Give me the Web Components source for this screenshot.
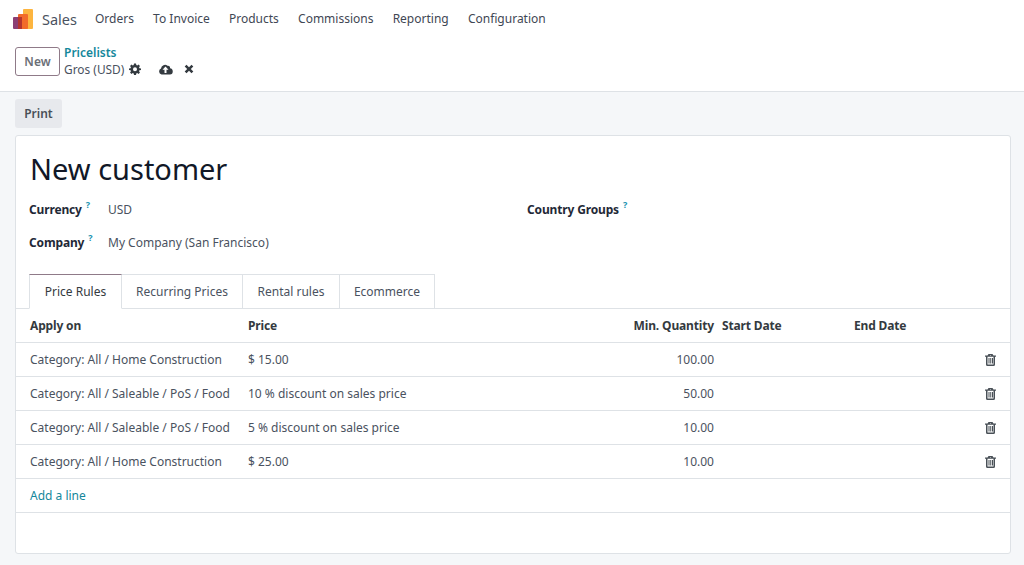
<!DOCTYPE html>
<html>
<head>
<meta charset="utf-8">
<title>Sales</title>
<style>
  html, body { margin: 0; padding: 0; height: 100%; overflow: hidden; }
  body { background: #f5f7f9; font: 12px "Noto Sans", sans-serif; color: #495057; }
</style>
</head>
<body>
<app-root></app-root>
<script>
const FONT = '"Noto Sans", "Open Sans", sans-serif';

class AppNavbar extends HTMLElement {
  constructor() {
    super();
    this.attachShadow( {mode: 'open'} ).innerHTML = /* template */ `
      <style>
        :host { display: flex; align-items: center; height: 37px; background: #fff; padding-left: 13px; font-family: ${FONT}; }
        svg { width: 20px; height: 20px; display: block; margin-top: 1px; }
        b { font-weight: 400; font-size: 14.5px; color: #4a5260; margin: 0 18px 0 9px; }
        span { font-size: 12px; color: #3f4754; margin-right: 19.2px; }
      </style>
      <svg viewBox="0 0 20 20">
        <rect x="10" y="0" width="10" height="20" rx="1" fill="#fdb53f"/>
        <rect x="5" y="5" width="10" height="15" rx="1" fill="#f26b2a"/>
        <rect x="0" y="8" width="9" height="12" rx="1" fill="#8c3f74"/>
        <rect x="5" y="8" width="4" height="12" fill="#b5352f"/>
      </svg>
      <b>Sales</b>
      <span>Orders</span><span>To Invoice</span><span>Products</span><span>Commissions</span><span>Reporting</span><span>Configuration</span>
    `;
  }
}
customElements.define( 'app-navbar', AppNavbar );

class AppControlPanel extends HTMLElement {
  constructor() {
    super();
    this.attachShadow( {mode: 'open'} ).innerHTML = /* template */ `
      <style>
        :host { display: flex; align-items: center; height: 54px; background: #fff; border-bottom: 1px solid #dee2e6; padding: 0 0 0 15px; font-family: ${FONT}; box-sizing: content-box; }
        button { width: 45px; height: 29px; box-sizing: border-box; margin: -5px 4px 0 0; padding: 0; background: #fff; border: 1px solid #8f7a88; border-radius: 3px; font: 600 12px ${FONT}; color: #6b6f76; }
        .crumb { display: flex; flex-direction: column; margin-top: -5px; }
        a { color: #14879b; font-size: 12px; font-weight: 600; line-height: 15px; }
        .row { display: flex; align-items: center; height: 18px; color: #4a5260; font-size: 11.9px; }
        svg { display: block; fill: #343a40; }
        .gear { margin-left: 5px; }
        .cloud { margin-left: 17px; }
        .close { margin-left: 11px; }
      </style>
      <button>New</button>
      <div class="crumb">
        <a>Pricelists</a>
        <div class="row">
          <span>Gros (USD)</span>
          <svg class="gear" width="12" height="12" viewBox="0 0 24 24"><path fill-rule="evenodd" d="M10 1h4l.6 3.100 1.900.8L19.100 3.100 21.900 6l-1.800 2.600.8 1.900L24 11v3l-3.100.6-.8 1.900 1.800 2.600-2.800 2.800-2.600-1.800-1.900.8L14 24h-4l-.6-3.100-1.900-.8-2.600 1.800L2.100 19.100l1.800-2.600-.8-1.900L0 14v-3l3.100-.6.8-1.900L2.100 6l2.800-2.900 2.600 1.800 1.900-.8zM12 8.500a4 4 0 1 0 0 8 4 4 0 0 0 0-8z"/></svg>
          <svg class="cloud" width="15" height="12" viewBox="0 0 30 24"><path fill-rule="evenodd" d="M24 10.500A4 4 0 0 0 19 5.500 8 8 0 0 0 6 10.800 6.500 6.500 0 0 0 7 23h17a6.300 6.300 0 0 0 0-12.500zM15 7l6 6.500h-4V20h-4v-6.500H9z"/></svg>
          <svg class="close" width="10" height="10" viewBox="0 0 22 22"><path d="M5.500 1.500 11 7l5.500-5.500 4 4L15 11l5.500 5.500-4 4L11 15l-5.500 5.500-4-4L7 11 1.500 5.500z"/></svg>
        </div>
      </div>
    `;
  }
}
customElements.define( 'app-control-panel', AppControlPanel );

class AppField extends HTMLElement {
  constructor() {
    super();
    this.attachShadow( {mode: 'open'} ).innerHTML = /* template */ `
      <style>
        :host { display: grid; grid-template-columns: 79px 1fr; align-items: center; height: 33px; font-family: ${FONT}; font-size: 12px; }
        label { font-weight: 700; color: #1f2937; white-space: nowrap; letter-spacing: -.15px; }
        sup { color: #1a93b0; font-size: 9px; font-weight: 700; margin-left: 4px; line-height: 0; vertical-align: 6px; }
        div { color: #4a5260; }
      </style>
      <label></label><div><slot></slot></div>
    `;
    this.shadowRoot.querySelector( 'label' ).innerHTML = this.getAttribute( 'label' ) + '<sup>?</sup>';
  }
}
customElements.define( 'app-field', AppField );

class AppTabs extends HTMLElement {
  constructor() {
    super();
    this.attachShadow( {mode: 'open'} ).innerHTML = /* template */ `
      <style>
        :host { display: flex; padding-left: 13px; height: 35px; box-sizing: border-box; border-bottom: 1px solid #dee2e6; font-family: ${FONT}; font-size: 12px; color: #4a5260; }
        div { height: 35px; box-sizing: border-box; display: flex; align-items: center; justify-content: center; border: 1px solid #dee2e6; border-left: 0; }
        .on { background: #fff; color: #343a40; border-left: 1px solid #dee2e6; border-top-color: #8f7a88; border-bottom-color: #fff; width: 93px; }
      </style>
      <div class="on">Price Rules</div>
      <div style="width: 121px">Recurring Prices</div>
      <div style="width: 97px">Rental rules</div>
      <div style="width: 95px">Ecommerce</div>
    `;
  }
}
customElements.define( 'app-tabs', AppTabs );

class AppTrash extends HTMLElement {
  constructor() {
    super();
    this.attachShadow( {mode: 'open'} ).innerHTML = /* template */ `
      <style>
        :host { display: block; width: 11px; height: 12px; }
        svg { display: block; fill: #495057; }
      </style>
      <svg width="11" height="12" viewBox="0 0 22 24"><path fill-rule="evenodd" d="M7 0h8l2 3h5v2.500h-2V21a3 3 0 0 1-3 3H5a3 3 0 0 1-3-3V5.500H0V3h5zM9.500 3h3l-.7-1h-1.600zM5 5.500V21h12V5.500zM7 8h2v11H7zm3.500 0h2v11h-2zM14 8h2v11h-2z"/></svg>
    `;
  }
}
customElements.define( 'app-trash', AppTrash );

class AppRuleRow extends HTMLElement {
  constructor() {
    super();
    this.attachShadow( {mode: 'open'} ).innerHTML = /* template */ `
      <style>
        :host { display: grid; grid-template-columns: 218px 1fr 100px 132px 131px 11px; align-items: center; height: 34px; box-sizing: border-box; padding: 0 14px; border-bottom: 1px solid #dee2e6; font-family: ${FONT}; font-size: 12px; color: #4a5260; }
        :host( [head] ) { font-weight: 700; color: #343a40; letter-spacing: -.15px; }
        .q { text-align: right; padding-right: 8px; margin-left: -20px; white-space: nowrap; }
        .s, .e { white-space: nowrap; }
      </style>
      <div class="a"></div><div class="p"></div><div class="q"></div><div class="s"></div><div class="e"></div><slot></slot>
    `;
    for( const key of ['a', 'p', 'q', 's', 'e'] ) {
      this.shadowRoot.querySelector( '.' + key ).textContent = this.getAttribute( key ) || '';
    }
  }
}
customElements.define( 'app-rule-row', AppRuleRow );

class AppRoot extends HTMLElement {
  constructor() {
    super();
    this.attachShadow( {mode: 'open'} ).innerHTML = /* template */ `
      <style>
        :host { display: block; font-family: ${FONT}; }
        .actions { padding: 7px 15px; display: flex; height: 29px; }
        .print { width: 47px; height: 29px; border: 0; padding: 0; background: #e7e9ed; border-radius: 3px; font: 600 12px ${FONT}; color: #495057; }
        .sheet { margin: 0 13px 0 15px; height: 419px; box-sizing: border-box; background: #fff; border: 1px solid #dee2e6; border-radius: 3px; }
        h1 { margin: 0; padding: 14px 14px 0; font-size: 29px; font-weight: 400; line-height: 38px; color: #111827; height: 38px; }
        .group { display: grid; grid-template-columns: 498px 1fr; padding: 5px 13px 0; height: 81px; }
        a { display: flex; align-items: center; height: 34px; box-sizing: border-box; padding-left: 14px; border-bottom: 1px solid #dee2e6; color: #14879b; font-size: 12px; }
      </style>
      <app-navbar></app-navbar>
      <app-control-panel></app-control-panel>
      <div class="actions"><button class="print">Print</button></div>
      <div class="sheet">
        <h1>New customer</h1>
        <div class="group">
          <div>
            <app-field label="Currency">USD</app-field>
            <app-field label="Company">My Company (San Francisco)</app-field>
          </div>
          <div>
            <app-field label="Country Groups"></app-field>
          </div>
        </div>
        <app-tabs></app-tabs>
        <app-rule-row head a="Apply on" p="Price" q="Min. Quantity" s="Start Date" e="End Date"></app-rule-row>
        <app-rule-row a="Category: All / Home Construction" p="$ 15.00" q="100.00"><app-trash></app-trash></app-rule-row>
        <app-rule-row a="Category: All / Saleable / PoS / Food" p="10 % discount on sales price" q="50.00"><app-trash></app-trash></app-rule-row>
        <app-rule-row a="Category: All / Saleable / PoS / Food" p="5 % discount on sales price" q="10.00"><app-trash></app-trash></app-rule-row>
        <app-rule-row a="Category: All / Home Construction" p="$ 25.00" q="10.00"><app-trash></app-trash></app-rule-row>
        <a>Add a line</a>
      </div>
    `;
  }
}
customElements.define( 'app-root', AppRoot );
</script>
</body>
</html>
